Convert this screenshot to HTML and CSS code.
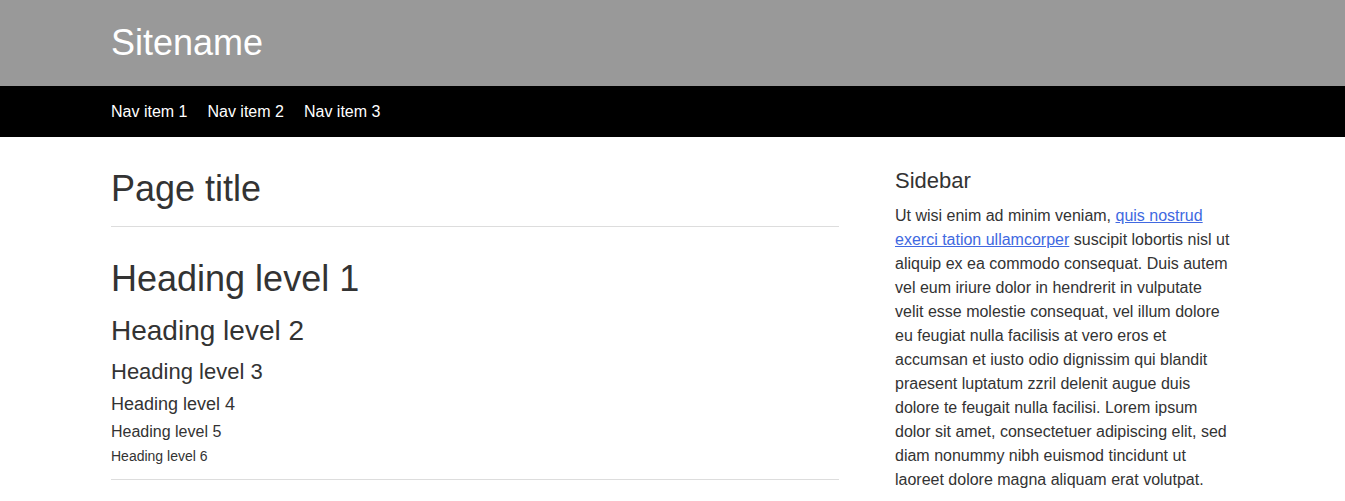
FILE: index.html
```html
<!DOCTYPE html>
<html lang="en">
<head>
    <meta charset="UTF-8">
    <meta name="viewport" content="width=device-width, initial-scale=1.0">
    <title>Sitename</title>
    <link rel="stylesheet" href="styles.css">
</head>
<body>
    <header class="site-header">
        <div class="container">
            <h1 class="site-name">Sitename</h1>
        </div>
    </header>

    <nav class="site-nav">
        <ul class="container nav-list">
            <li><a href="#">Nav item 1</a></li>
            <li><a href="#">Nav item 2</a></li>
            <li><a href="#">Nav item 3</a></li>
        </ul>
    </nav>

    <div class="container page">
        <main class="content">
            <h1 class="page-title">Page title</h1>
            <hr>
            <h1>Heading level 1</h1>
            <h2>Heading level 2</h2>
            <h3>Heading level 3</h3>
            <h4>Heading level 4</h4>
            <h5>Heading level 5</h5>
            <h6>Heading level 6</h6>
            <hr class="end-rule">
        </main>

        <aside class="sidebar">
            <h2>Sidebar</h2>
            <p>Ut wisi enim ad minim veniam, <a href="#">quis nostrud exerci tation ullamcorper</a> suscipit lobortis nisl ut aliquip ex ea commodo consequat. Duis autem vel eum iriure dolor in hendrerit in vulputate velit esse molestie consequat, vel illum dolore eu feugiat nulla facilisis at vero eros et accumsan et iusto odio dignissim qui blandit praesent luptatum zzril delenit augue duis dolore te feugait nulla facilisi. Lorem ipsum dolor sit amet, consectetuer adipiscing elit, sed diam nonummy nibh euismod tincidunt ut laoreet dolore magna aliquam erat volutpat.</p>
        </aside>
    </div>
</body>
</html>
```

FILE: styles.css
```css
body {
    font-family: "Liberation Sans", Arial, sans-serif;
    font-size: 16px;
    line-height: 24px;
    color: #333;
    margin: 0;
    padding: 0;
    background-color: #fff;
}

.container {
    width: 1123px;
    margin: 0 auto;
}

h1, h2, h3, h4, h5, h6 {
    font-weight: normal;
    line-height: 1.1;
    margin: 0;
}

h1 { font-size: 36px; }
h2 { font-size: 28px; }
h3 { font-size: 22px; }
h4 { font-size: 18px; }
h5 { font-size: 16px; }
h6 { font-size: 14px; }

hr {
    border: 0;
    border-top: 1px solid #ddd;
    margin: 0;
}

a {
    color: #4169e1;
}

.site-header {
    background-color: #999;
    padding: 22px 0;
}

.site-name {
    color: #fff;
    line-height: 42px;
}

.site-nav {
    background-color: #000;
    padding: 16px 0;
}

.nav-list {
    display: flex;
    gap: 20px;
    list-style: none;
    padding: 0;
    line-height: 19px;
}

.nav-list a {
    color: #fff;
    text-decoration: none;
}

.page {
    display: flex;
    gap: 56px;
}

.content {
    width: 728px;
    padding-top: 32px;
}

.page-title {
    margin-bottom: 17px;
}

.content h1:not(.page-title) {
    margin-top: 32px;
    margin-bottom: 18px;
}

.content h2 { margin-bottom: 13px; }
.content h3 { margin-bottom: 11px; }
.content h4 { margin-bottom: 8px; }
.content h5 { margin-bottom: 8px; }

.end-rule {
    margin-top: 15px;
}

.sidebar {
    flex: 1;
    padding-top: 32px;
}

.sidebar h2 {
    font-size: 22px;
}

.sidebar p {
    margin: 11px 0 0;
}
```
